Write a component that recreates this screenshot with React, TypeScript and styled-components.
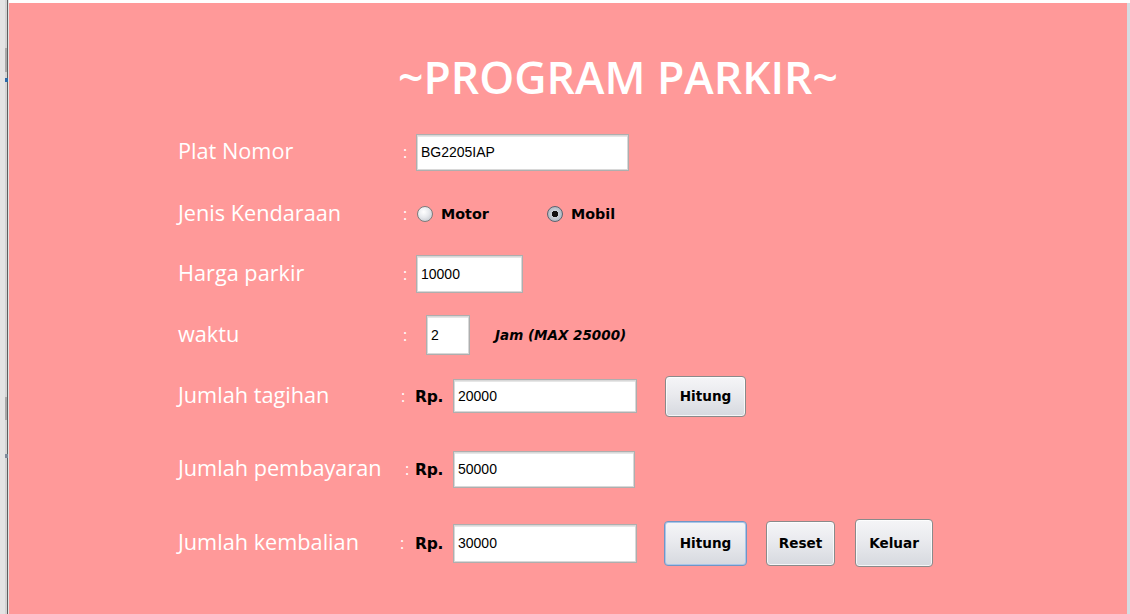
import React from "react";
import styled, { createGlobalStyle } from "styled-components";

const Global = createGlobalStyle`
  html, body { margin: 0; padding: 0; background: #ffffff; }
  body { width: 1130px; height: 614px; overflow: hidden; }
  #root { width: 1130px; height: 614px; }
`;

const Frame = styled.div`
  display: flex;
  width: 1130px;
  height: 614px;
`;

const SideStrip = styled.div`
  flex: none;
  width: 9px;
  height: 100%;
  background:
    linear-gradient(#2d6aa8, #2d6aa8) 5px 78px / 3px 4px no-repeat,
    linear-gradient(#7f8a99, #7f8a99) 5px 454px / 3px 4px no-repeat,
    linear-gradient(#a9a9a9, #a9a9a9) 5px 48px / 2px 24px no-repeat,
    linear-gradient(#a9a9a9, #a9a9a9) 5px 397px / 2px 23px no-repeat,
    linear-gradient(to right, #e4e4e4 0 5px, #d4d4d4 5px 7px, #5f5f5f 7px 8px, #e2e2e2 8px 9px);
`;

const Main = styled.div`
  flex: 1;
  display: flex;
  flex-direction: column;
  padding-top: 3px;
  background: #ffffff;
`;

const Panel = styled.div`
  flex: 1;
  background: #ff9999;
  padding: 43px 0 0 0;
  display: flex;
  flex-direction: column;
`;

const RightStrip = styled.div`
  flex: none;
  width: 3px;
  height: 100%;
  background: linear-gradient(#ffffff 0 3px, #d6dbe1 3px);
`;

const Title = styled.h1`
  margin: 0 0 0 389px;
  height: 61px;
  line-height: 61px;
  font-family: "Open Sans", "Noto Sans", sans-serif;
  font-weight: 600;
  font-size: 44.5px;
  color: #ffffff;
  white-space: nowrap;
`;

const Form = styled.div`
  margin-top: 15px;
  padding-left: 169px;
  display: flex;
  flex-direction: column;
`;

const Row = styled.div<{ $h: number }>`
  display: flex;
  align-items: center;
  height: ${(p) => p.$h}px;
`;

const Label = styled.div<{ $w: number }>`
  flex: none;
  width: ${(p) => p.$w}px;
  padding-bottom: 3px;
  font-family: "Open Sans", "Noto Sans", sans-serif;
  font-size: 21.7px;
  color: #ffffff;
  white-space: nowrap;
`;

const Colon = styled.span`
  flex: none;
  width: 4px;
  font-family: "Open Sans", sans-serif;
  font-size: 16px;
  color: #ffffff;
  line-height: 1;
`;

const Field = styled.div<{ $w: number; $h: number; $ml: number }>`
  flex: none;
  box-sizing: border-box;
  width: ${(p) => p.$w}px;
  height: ${(p) => p.$h}px;
  margin-left: ${(p) => p.$ml}px;
  background: #ffffff;
  border: 1px solid #aeaeae;
  box-shadow: inset 0 0 0 1px #d8d8d8, inset 0 2px 0 #e6e6e6;
  padding-left: 4px;
  display: flex;
  align-items: center;
  font-family: "Liberation Sans", Arial, sans-serif;
  font-size: 14px;
  color: #000000;
`;

const Rp = styled.span<{ $ml: number }>`
  flex: none;
  width: 28px;
  margin-left: ${(p) => p.$ml}px;
  padding-top: 2px;
  font-family: "DejaVu Sans", Verdana, sans-serif;
  font-weight: 700;
  font-size: 15.5px;
  letter-spacing: -0.3px;
  color: #000000;
  white-space: nowrap;
`;

const Note = styled.span<{ $ml: number }>`
  margin-left: ${(p) => p.$ml}px;
  font-family: "DejaVu Sans", Verdana, sans-serif;
  font-weight: 700;
  font-style: italic;
  font-size: 13.5px;
  color: #000000;
  white-space: nowrap;
`;

const RadioGroup = styled.div<{ $ml: number }>`
  display: flex;
  align-items: center;
  margin-left: ${(p) => p.$ml}px;
`;

const RadioOption = styled.label<{ $w?: number }>`
  display: flex;
  align-items: center;
  gap: 8px;
  width: ${(p) => (p.$w ? `${p.$w}px` : "auto")};
  font-family: "DejaVu Sans", Verdana, sans-serif;
  font-weight: 700;
  font-size: 14.3px;
  color: #000000;
`;

const RadioCircle = styled.span<{ $checked?: boolean }>`
  box-sizing: border-box;
  width: 16px;
  height: 16px;
  border-radius: 50%;
  border: 1px solid ${(p) => (p.$checked ? "#5b6470" : "#7c7c7c")};
  background: ${(p) =>
    p.$checked
      ? "radial-gradient(circle at 50% 50%, #111 0 3px, #c9d0d8 3.5px, #9aa4b0 100%)"
      : "radial-gradient(circle at 40% 35%, #ffffff 0, #e6e8ec 45%, #b9bec6 100%)"};
  display: inline-block;
`;

const Button = styled.button<{ $w: number; $h: number; $ml: number; $focus?: boolean }>`
  flex: none;
  box-sizing: border-box;
  width: ${(p) => p.$w}px;
  height: ${(p) => p.$h}px;
  margin-left: ${(p) => p.$ml}px;
  padding: 0;
  border-radius: 4px;
  border: 1px solid ${(p) => (p.$focus ? "#6f96c6" : "#8a8a8a")};
  box-shadow: ${(p) =>
    p.$focus ? "inset 0 0 0 1px #a9c5e8" : "inset 0 0 0 1px rgba(255,255,255,0.75)"};
  background: linear-gradient(#f5f5f7 0%, #e9eaee 45%, #d6d9df 100%);
  font-family: "DejaVu Sans", Verdana, sans-serif;
  font-weight: 700;
  font-size: 13.6px;
  color: #000000;
`;

export default function App() {
  return (
    <>
      <Global />
      <Frame>
        <SideStrip />
        <Main>
          <Panel>
            <Title>~PROGRAM PARKIR~</Title>
            <Form>
              <Row $h={60}>
                <Label $w={225}>Plat Nomor</Label>
                <Colon>:</Colon>
                <Field $w={213} $h={37} $ml={9}>BG2205IAP</Field>
              </Row>
              <Row $h={64}>
                <Label $w={225}>Jenis Kendaraan</Label>
                <Colon>:</Colon>
                <RadioGroup $ml={10}>
                  <RadioOption $w={130}>
                    <RadioCircle />
                    Motor
                  </RadioOption>
                  <RadioOption>
                    <RadioCircle $checked />
                    Mobil
                  </RadioOption>
                </RadioGroup>
              </Row>
              <Row $h={56}>
                <Label $w={225}>Harga parkir</Label>
                <Colon>:</Colon>
                <Field $w={107} $h={38} $ml={9}>10000</Field>
              </Row>
              <Row $h={66}>
                <Label $w={225}>waktu</Label>
                <Colon>:</Colon>
                <Field $w={44} $h={40} $ml={19}>2</Field>
                <Note $ml={25}>Jam (MAX 25000)</Note>
              </Row>
              <Row $h={56}>
                <Label $w={223}>Jumlah tagihan</Label>
                <Colon>:</Colon>
                <Rp $ml={10}>Rp.</Rp>
                <Field $w={184} $h={34} $ml={10}>20000</Field>
                <Button $w={81} $h={41} $ml={28}>Hitung</Button>
              </Row>
              <Row $h={90}>
                <Label $w={227}>Jumlah pembayaran</Label>
                <Colon>:</Colon>
                <Rp $ml={6}>Rp.</Rp>
                <Field $w={182} $h={37} $ml={10}>50000</Field>
              </Row>
              <Row $h={58}>
                <Label $w={222}>Jumlah kembalian</Label>
                <Colon>:</Colon>
                <Rp $ml={11}>Rp.</Rp>
                <Field $w={184} $h={39} $ml={10}>30000</Field>
                <Button $w={83} $h={45} $ml={27} $focus>Hitung</Button>
                <Button $w={69} $h={45} $ml={19}>Reset</Button>
                <Button $w={78} $h={48} $ml={20}>Keluar</Button>
              </Row>
            </Form>
          </Panel>
        </Main>
        <RightStrip />
      </Frame>
    </>
  );
}
